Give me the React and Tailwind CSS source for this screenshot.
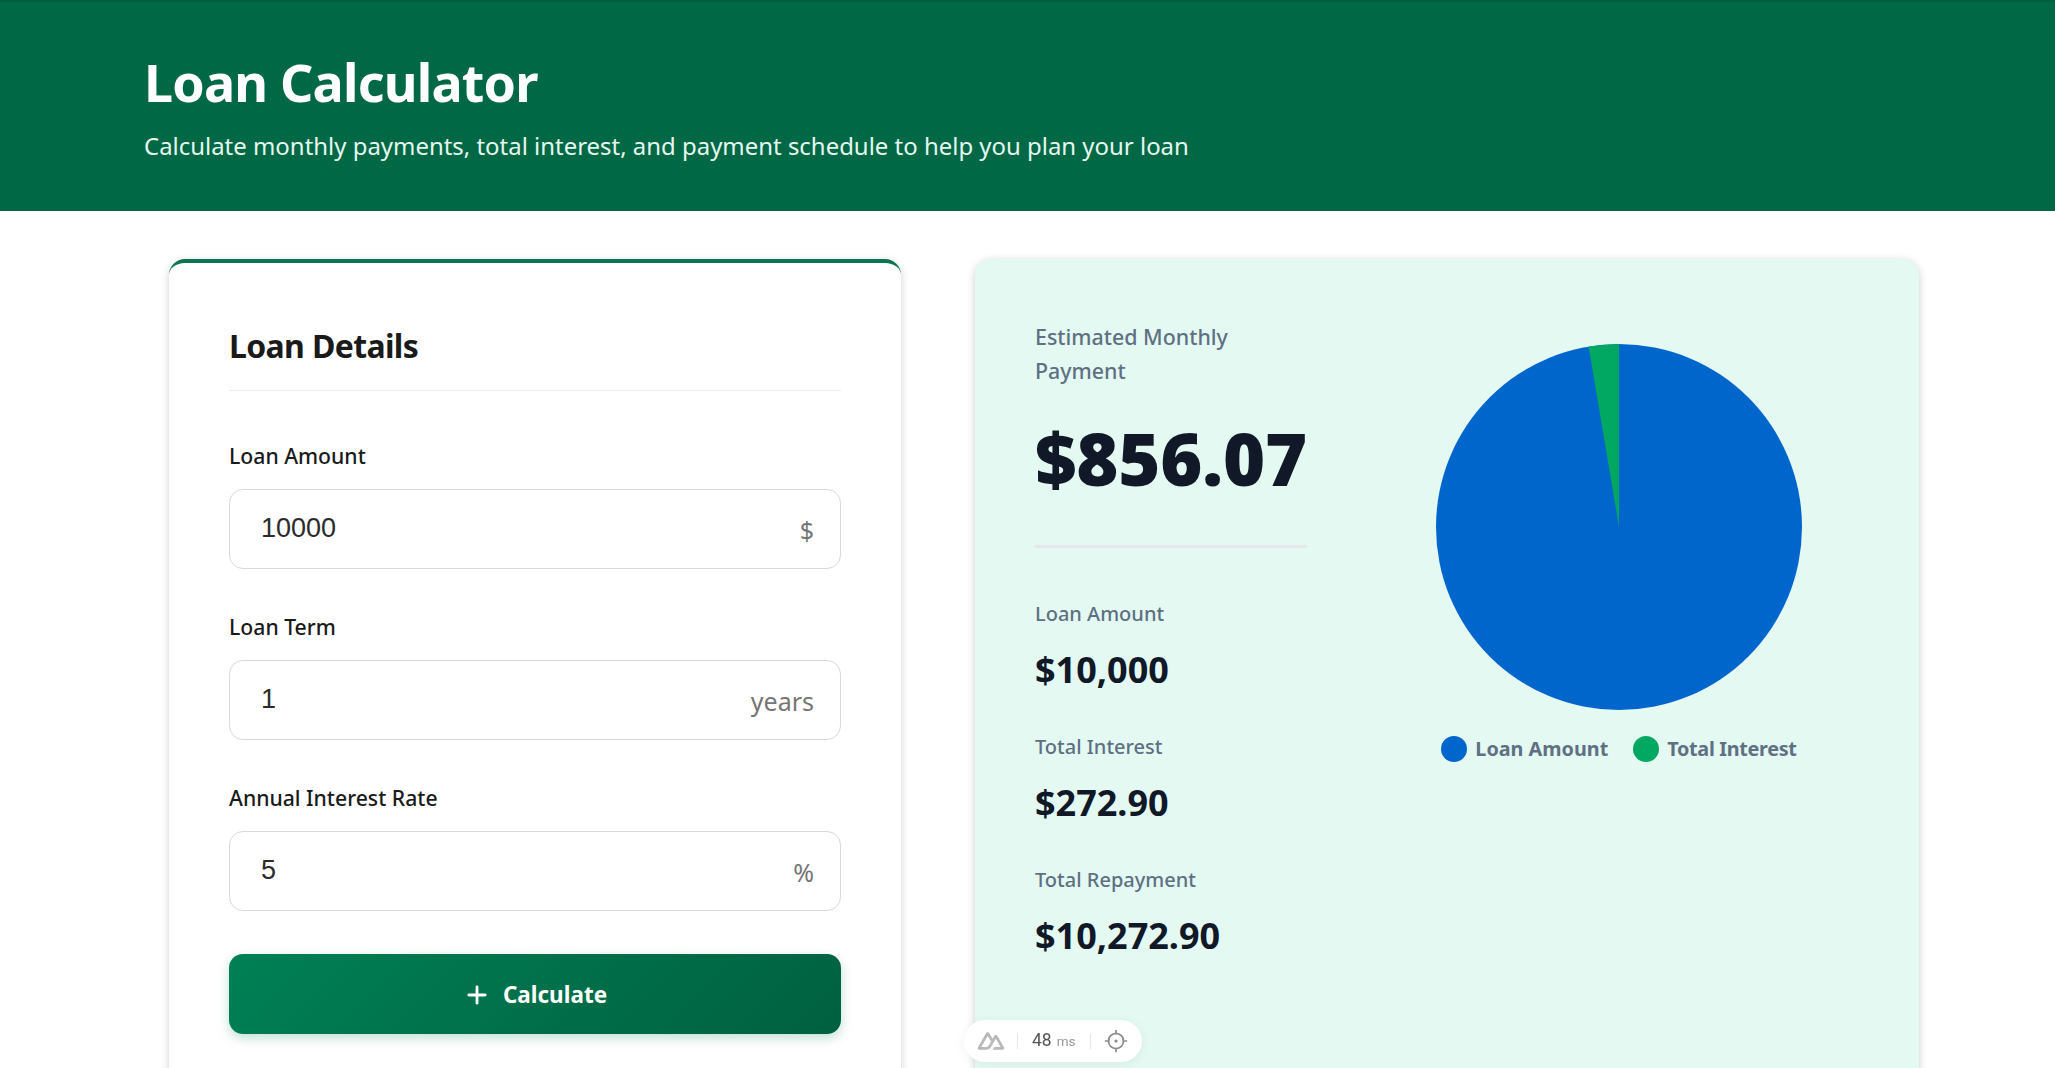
import { Plus } from "lucide-react";

const font = "font-['Noto_Sans',sans-serif]";

function Field({ label, value, unit, className }) {
  return (
    <div className={className}>
      <label className="block text-[21.2px] leading-[28px] font-medium text-[#1a1a1a]">{label}</label>
      <div className="mt-[19px] h-[80px] flex items-center justify-between rounded-[14px] border border-[#d9d9d9] bg-white pl-[31px] pr-[26px]">
        <span className="font-['Liberation_Sans',sans-serif] text-[27px] leading-none text-[#2b2b2b] -mt-[2px]">{value}</span>
        <span className="text-[25px] leading-none text-[#757575] mt-[3px]">{unit}</span>
      </div>
    </div>
  );
}

function Stat({ label, value, className }) {
  return (
    <div className={className}>
      <p className="text-[20px] leading-[28px] font-medium text-[#5f7083]">{label}</p>
      <p className="mt-[20px] text-[36px] leading-[44px] font-bold text-[#111827]">{value}</p>
    </div>
  );
}

function PieChart() {
  // 272.90 of 10,272.90 goes to interest
  const angle = (272.9 / 10272.9) * 2 * Math.PI;
  const x = 183 - 183 * Math.sin(angle);
  const y = 183 - 183 * Math.cos(angle);
  return (
    <svg width="366" height="366" viewBox="0 0 366 366">
      <circle cx="183" cy="183" r="183" fill="#0066cc" />
      <path d={`M183 183 L${x} ${y} A183 183 0 0 1 183 0 Z`} fill="#00a862" />
    </svg>
  );
}

function DevBadge() {
  return (
    <div className="fixed left-[964px] bottom-[6px] h-[42px] w-[178px] flex items-center rounded-full bg-white pl-[11px] shadow-[0_2px_12px_rgba(0,0,0,0.06)]">
      <svg width="32" height="32" viewBox="0 0 512 512" fill="#b9b9b9">
        <path d="M281.44 397.667H438.32C443.326 397.667 448.118 395.908 452.453 393.427C456.789 390.946 461.258 387.831 463.76 383.533C466.262 379.236 468.002 374.36 468 369.399C467.998 364.437 466.266 359.563 463.76 355.268L357.76 172.947C355.258 168.65 352.201 165.534 347.867 163.053C343.532 160.573 337.325 158.813 332.32 158.813C327.315 158.813 322.521 160.573 318.187 163.053C313.852 165.534 310.795 168.65 308.293 172.947L281.44 219.587L227.733 129.13C225.229 124.834 222.176 120.307 217.84 117.827C213.504 115.346 208.713 115 203.707 115C198.701 115 193.909 115.346 189.573 117.827C185.238 120.307 180.771 124.834 178.267 129.13L46.8267 355.268C44.3208 359.563 44.0022 364.437 44 369.399C43.9978 374.36 44.3246 379.235 46.8267 383.533C49.3288 387.83 53.7979 390.946 58.1333 393.427C62.4688 395.908 67.2603 397.667 72.2667 397.667H171.2C210.401 397.667 238.934 380.082 258.827 346.787L306.88 263.4L332.32 219.587L410.053 352.44H306.88L281.44 397.667ZM169.787 352.44H100.533L203.707 174.36L256 263.4L221.361 323.784C208.151 345.387 193.089 352.44 169.787 352.44Z" />
      </svg>
      <div className="ml-[10px] h-[15px] w-px bg-[#e5e5e5]" />
      <div className="ml-[14px] flex items-baseline font-['Roboto',sans-serif]">
        <span className="text-[17.5px] leading-none text-[#555]">48</span>
        <span className="ml-[5px] text-[13.5px] leading-none text-[#999]">ms</span>
      </div>
      <div className="ml-[15px] h-[15px] w-px bg-[#e5e5e5]" />
      <svg className="ml-[13px]" width="24" height="24" viewBox="0 0 24 24" fill="none" stroke="#8a8a8a" strokeWidth="1.7" strokeLinecap="round">
        <circle cx="12" cy="12" r="7.5" />
        <circle cx="12" cy="12" r="1.6" fill="#8a8a8a" stroke="none" />
        <path d="M12 1.5v3M12 19.5v3M1.5 12h3M19.5 12h3" />
      </svg>
    </div>
  );
}

export default function App() {
  return (
    <div className={`${font} h-screen overflow-hidden bg-white`}>
      <header className="h-[211px] bg-[#006845] border-t-[2px] border-[#005c3d] pl-[144px] pt-[49px]">
        <h1 className="text-[52px] leading-[62px] font-bold tracking-[-0.8px] text-white">Loan Calculator</h1>
        <p className="mt-[16px] text-[23.95px] leading-[34px] text-[#e6f7f0]">
          Calculate monthly payments, total interest, and payment schedule to help you plan your loan
        </p>
      </header>

      <main className="grid grid-cols-[732px_945px] gap-x-[73px] pl-[169px] pt-[48px]">
        {/* Form card */}
        <section className="h-[900px] rounded-[16px] border-t-[4px] border-[#0b7452] bg-white px-[60px] pt-[62px] shadow-[0_2px_8px_rgba(0,0,0,0.18)]">
          <h2 className="border-b border-[#efefef] pb-[23px] text-[32px] leading-[42px] font-bold tracking-[-0.65px] text-[#1a1a1a]">Loan Details</h2>
          <Field className="mt-[51px]" label="Loan Amount" value="10000" unit="$" />
          <Field className="mt-[44px]" label="Loan Term" value="1" unit="years" />
          <Field className="mt-[44px]" label="Annual Interest Rate" value="5" unit="%" />
          <button className="mt-[43px] h-[80px] w-full flex items-center justify-center gap-[12px] rounded-[14px] bg-[linear-gradient(135deg,#008055,#006040)] pt-[1px] text-[22.5px] font-bold text-white shadow-[0_4px_12px_rgba(0,128,85,0.25)]">
            <Plus size={28} strokeWidth={2.4} />
            Calculate
          </button>
        </section>

        {/* Results card */}
        <section className="ml-[1px] h-[900px] flex rounded-[16px] bg-[#e3f9f1] pl-[60px] pt-[61px] shadow-[0_2px_8px_rgba(0,0,0,0.2)]">
          <div className="w-[272px]">
            <p className="text-[21.4px] leading-[34px] font-medium text-[#5f7083]">Estimated Monthly Payment</p>
            <p className="mt-[24px] border-b-[3px] border-[#e5e7eb] pb-[41px] text-[72px] leading-[92px] font-black tracking-[-0.2px] text-[#111827]">$856.07</p>
            <Stat className="mt-[52px]" label="Loan Amount" value="$10,000" />
            <Stat className="mt-[41px]" label="Total Interest" value="$272.90" />
            <Stat className="mt-[41px]" label="Total Repayment" value="$10,272.90" />
          </div>
          <div className="ml-[129px] flex w-[366px] flex-col items-center pt-[24px]">
            <PieChart />
            <div className="mt-[25px] flex items-center gap-[25px] whitespace-nowrap text-[19.8px] leading-[28px] font-bold text-[#5f7083]">
              <span className="flex items-center gap-[8px]">
                <i className="h-[26px] w-[26px] rounded-full bg-[#0066cc]" />
                Loan Amount
              </span>
              <span className="flex items-center gap-[8px] tracking-[-0.3px]">
                <i className="h-[26px] w-[26px] rounded-full bg-[#00a862]" />
                Total Interest
              </span>
            </div>
          </div>
        </section>
      </main>
      <DevBadge />
    </div>
  );
}
